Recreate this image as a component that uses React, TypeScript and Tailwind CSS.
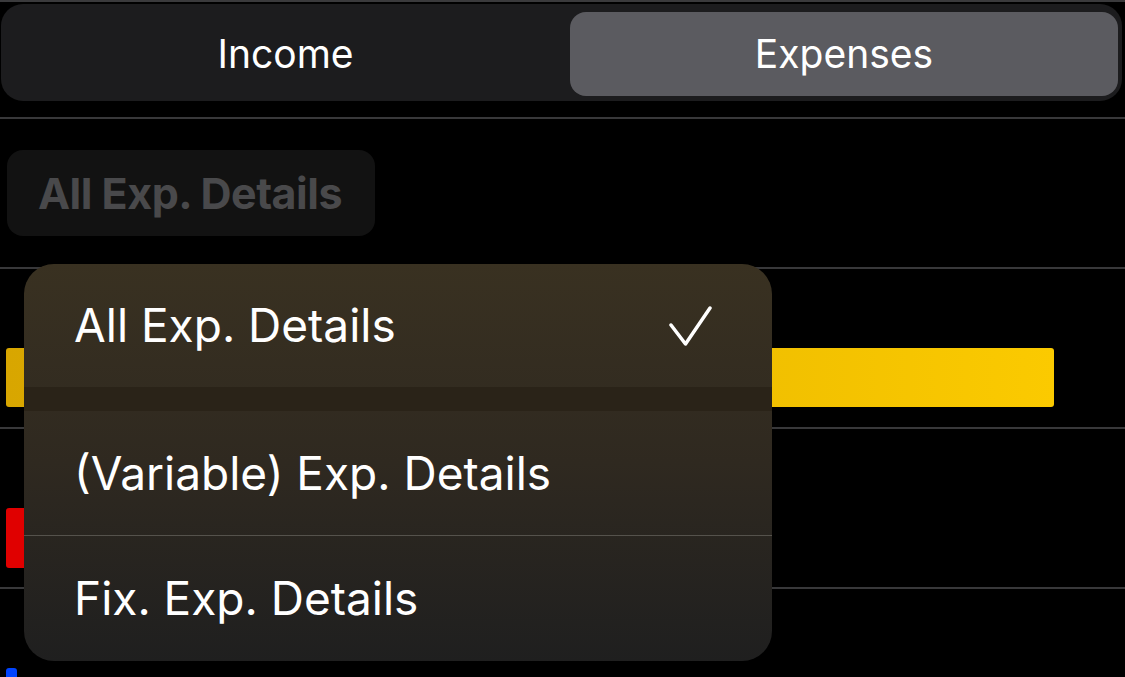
const FONT = "font-['Inter','Noto_Sans',sans-serif]";

function Segmented() {
  return (
    <div className="ml-[1px] mr-[3px] mt-[2px] flex h-[97px] gap-[4px] rounded-[22px] bg-[#1c1c1e] pl-[4px] pr-[4px] pt-[8px] pb-[5px]">
      <div className="flex flex-1 items-center justify-center text-[39px] text-white">Income</div>
      <div className="flex w-[548px] items-center justify-center rounded-[16px] bg-[#5b5b60] text-[39px] text-white">
        Expenses
      </div>
    </div>
  );
}

function BarRow({ bar }: { bar: React.ReactNode }) {
  return (
    <div className="h-[160px] border-t-2 border-[#38383a] pt-[79px] pl-[6px]">{bar}</div>
  );
}

function CheckMark() {
  return (
    <svg width="44" height="44" viewBox="0 0 44 44" fill="none" className="mr-[2px]">
      <path
        d="M3 21 L17.5 40 L42 4"
        stroke="white"
        strokeWidth="3.5"
        strokeLinecap="round"
        strokeLinejoin="round"
      />
    </svg>
  );
}

const MENU = [
  { label: 'All Exp. Details', checked: true },
  { label: '(Variable) Exp. Details', checked: false },
  { label: 'Fix. Exp. Details', checked: false },
];

function Menu() {
  return (
    <div className="absolute left-[24px] top-[262px] flex w-[748px] flex-col overflow-hidden rounded-[30px] bg-linear-to-b from-[#393121] via-[#2f2920] to-[#1f1f1f] text-white">
      <div className="flex h-[123px] items-center justify-between pl-[50px] pr-[58px] text-[46px]">
        <span>{MENU[0].label}</span>
        <CheckMark />
      </div>
      <div className="h-[24px] bg-[#2a2318]" />
      <div className="flex h-[124px] items-center pl-[50px] text-[46px]">{MENU[1].label}</div>
      <div className="h-px bg-[#55524c]" />
      <div className="flex h-[125px] items-center pl-[50px] text-[46px]">{MENU[2].label}</div>
    </div>
  );
}

export default function App() {
  return (
    <div className={`relative h-[677px] w-[1125px] overflow-hidden border-t-2 border-[#3a3a3c] bg-black ${FONT}`}>
      <Segmented />
      <div className="mt-[16px] border-t-2 border-[#38383a] px-[7px] pt-[31px] pb-[31px]">
        <div className="flex h-[86px] w-[368px] items-center rounded-[16px] bg-[#121212] pl-[31px] text-[43px] font-bold tracking-[-0.5px] text-[#49494b]">
          All Exp. Details
        </div>
      </div>
      <BarRow
        bar={<div className="h-[59px] w-[1048px] rounded-[3px] bg-linear-to-r from-[#d8a600] to-[#fbca00]" />}
      />
      <BarRow bar={<div className="h-[60px] w-[120px] rounded-[3px] bg-[#e00000]" />} />
      <BarRow bar={<div className="h-[60px] w-[11px] rounded-[3px] bg-[#0044ff]" />} />
      <Menu />
    </div>
  );
}
